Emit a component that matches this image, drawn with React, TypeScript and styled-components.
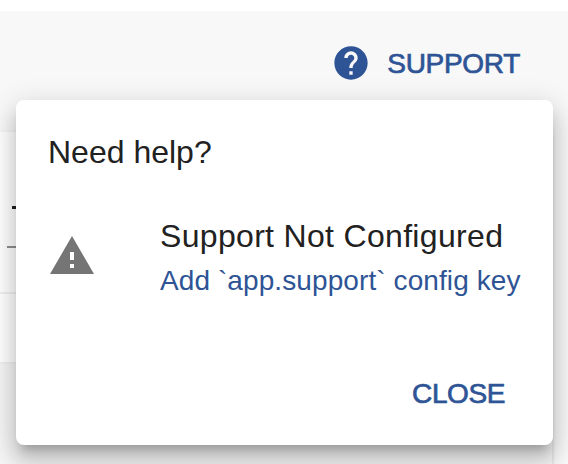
import React from 'react';
import styled, { createGlobalStyle } from 'styled-components';

const GlobalStyle = createGlobalStyle`
  * { box-sizing: border-box; }
  body { margin: 0; overflow: hidden; background: #fff; font-family: "Liberation Sans", Arial, sans-serif; }
`;

const Page = styled.div`
  position: relative;
  width: 568px;
  height: 464px;
  overflow: hidden;
  padding-top: 11px;
`;

const Content = styled.main`
  height: 453px;
  background: #f8f8f8;
  display: flex;
  flex-direction: column;
`;

const Toolbar = styled.header`
  height: 121px;
  flex: none;
  display: flex;
  justify-content: flex-end;
  align-items: flex-start;
  padding: 32px 48px 0 0;
`;

const TextButton = styled.button<{ $tracking: number }>`
  border: 0;
  padding: 0;
  background: none;
  display: flex;
  align-items: center;
  gap: 16px;
  height: 40px;
  color: #2e5496;
  font: 28px/40px "Liberation Sans", Arial, sans-serif;
  letter-spacing: ${(p) => p.$tracking}px;
  white-space: nowrap;
  -webkit-text-stroke: 0.7px #2e5496;
`;

const ButtonLabel = styled.span`
  padding-top: 2px;
`;

const Icon = styled.svg<{ $size: number }>`
  width: ${(p) => p.$size}px;
  height: ${(p) => p.$size}px;
  flex: none;
  fill: currentColor;
  stroke: none;
`;

const Card = styled.section`
  width: 552px;
  flex: 1;
  background: #f5f5f5;
  box-shadow: 0 2px 4px rgba(0, 0, 0, 0.18);
`;

const CardHeader = styled.div`
  height: 162px;
  background: #fff;
  border-bottom: 2px solid #f0f0f0;
  padding: 74px 0 0 7px;
`;

const Heading = styled.div`
  width: 60px;
  height: 3px;
  margin-left: 5px;
  background: #222;
`;

const Underline = styled.div`
  width: 80px;
  height: 2px;
  margin-top: 37px;
  background: #8f8f8f;
`;

const CardRow = styled.div`
  height: 70px;
  background: #fff;
  border-bottom: 2px solid #f0f0f0;
`;

const Popover = styled.div`
  position: absolute;
  left: 16px;
  top: 100px;
  width: 537px;
  height: 345px;
  border-radius: 8px;
  background: #fff;
  color: #212121;
  display: flex;
  flex-direction: column;
  padding: 32px;
  box-shadow: 0 10px 10px -6px rgba(0, 0, 0, 0.2), 0 16px 20px 2px rgba(0, 0, 0, 0.14),
    0 6px 28px 4px rgba(0, 0, 0, 0.12);
`;

const Title = styled.div<{ $tracking?: number }>`
  font-size: 32px;
  line-height: 40px;
  letter-spacing: ${(p) => p.$tracking ?? 0}px;
  white-space: nowrap;
`;

const Item = styled.div`
  display: flex;
  align-items: center;
  gap: 64px;
  margin-top: 42px;
  height: 84px;
  color: #757575;
`;

const ItemText = styled.div`
  color: #212121;
  padding-top: 9px;
`;

const Link = styled.a`
  display: block;
  color: #2e5496;
  font-size: 28px;
  line-height: 50px;
  letter-spacing: 0.09px;
  white-space: nowrap;
`;

const Actions = styled.div`
  display: flex;
  justify-content: flex-end;
  padding: 76px 16px 0 0;
`;

export default function App() {
  return (
    <Page>
      <GlobalStyle />
      <Content>
        <Toolbar>
          <TextButton $tracking={-0.3}>
            <Icon $size={40} viewBox="0 0 24 24">
              <path d="M12 2C6.48 2 2 6.48 2 12s4.48 10 10 10 10-4.48 10-10S17.52 2 12 2zm1 17h-2v-2h2v2zm2.07-7.75l-.9.92C13.45 12.9 13 13.5 13 15h-2v-.5c0-1.1.45-2.1 1.17-2.83l1.24-1.26c.37-.36.59-.86.59-1.41 0-1.1-.9-2-2-2s-2 .9-2 2H8c0-2.21 1.79-4 4-4s4 1.79 4 4c0 .88-.36 1.68-.93 2.25z" />
            </Icon>
            <ButtonLabel>SUPPORT</ButtonLabel>
          </TextButton>
        </Toolbar>
        <Card>
          <CardHeader>
            <Heading />
            <Underline />
          </CardHeader>
          <CardRow />
        </Card>
      </Content>
      <Popover role="dialog">
        <Title>Need help?</Title>
        <Item>
          <Icon $size={48} viewBox="0 0 24 24">
            <path d="M1 21h22L12 2 1 21zm12-3h-2v-2h2v2zm0-4h-2v-4h2v4z" />
          </Icon>
          <ItemText>
            <Title $tracking={0.32}>Support Not Configured</Title>
            <Link>Add `app.support` config key</Link>
          </ItemText>
        </Item>
        <Actions>
          <TextButton $tracking={-0.4}>CLOSE</TextButton>
        </Actions>
      </Popover>
    </Page>
  );
}
